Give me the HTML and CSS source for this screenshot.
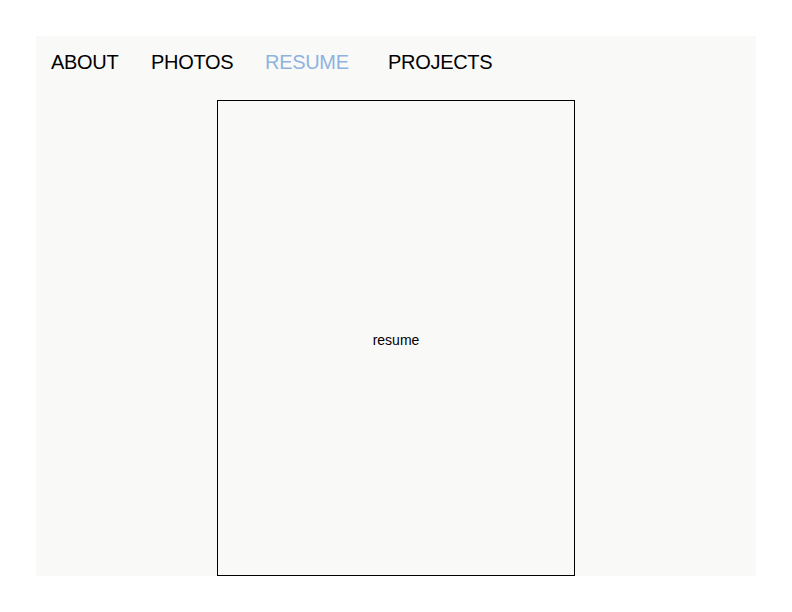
FILE: index.html
```html
<!DOCTYPE html>
<html>
<head>
<meta charset="utf-8">
<link rel="stylesheet" href="styles.css">
</head>
<body>
<div class="page">
  <nav class="nav">
    <a class="nav-item item-about">ABOUT</a>
    <a class="nav-item item-photos">PHOTOS</a>
    <a class="nav-item item-resume active">RESUME</a>
    <a class="nav-item item-projects">PROJECTS</a>
  </nav>
  <div class="resume-box">resume</div>
</div>
</body>
</html>
```
FILE: styles.css
```css
html, body {
  margin: 0;
  padding: 0;
  background: #ffffff;
}
body {
  font-family: "Liberation Sans", Arial, sans-serif;
}
.page {
  margin: 36px 0 0 36px;
  width: 720px;
  height: 540px;
  background: #f9faf8;
  display: flex;
  flex-direction: column;
}
.nav {
  display: flex;
  padding: 15px 0 0 15px;
  height: 48px;
  box-sizing: border-box;
}
.nav-item {
  font-size: 20px;
  line-height: 23px;
  color: #000;
  letter-spacing: -0.3px;
}
.item-about { width: 100px; }
.item-photos { width: 114px; }
.item-resume { width: 123px; }
.nav-item.active { color: #8fb3df; }
.resume-box {
  margin: 16px 0 0 181px;
  width: 358px;
  flex: 1;
  box-sizing: border-box;
  border: 1px solid #000;
  display: flex;
  align-items: center;
  justify-content: center;
  font-size: 14px;
  color: #000;
  padding-top: 4px;
}
```
